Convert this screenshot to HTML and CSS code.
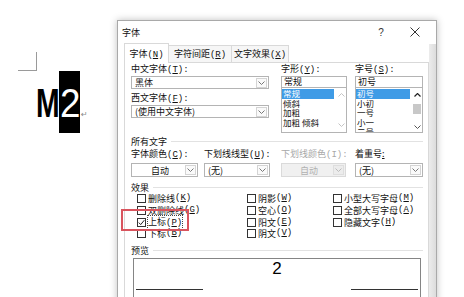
FILE: index.html
```html
<!DOCTYPE html>
<html lang="zh-CN">
<head>
    <meta charset="UTF-8">
    <meta name="viewport" content="width=device-width, initial-scale=1.0">
    <title>字体</title>
    <link rel="stylesheet" href="styles.css">
</head>
<body>
    <div class="doc">
        <div class="corner"></div>
        <div class="docline">
            <span class="m"><span class="glyph">M</span></span><span class="sel"><span class="glyph two">2</span></span><span class="para">↵</span>
        </div>
    </div>

    <div class="dialog">
        <div class="titlebar">
            <span class="title">字体</span>
            <span class="help">?</span>
            <span class="close">
                <svg width="10" height="10" viewBox="0 0 10 10"><path d="M0.5 0.5L9.5 9.5M9.5 0.5L0.5 9.5" stroke="#333" stroke-width="1" fill="none"/></svg>
            </span>
        </div>

        <div class="tabs">
            <div class="tab active">字体<span class="k">(<u>N</u>)</span></div>
            <div class="tab">字符间距<span class="k">(<u>R</u>)</span></div>
            <div class="tab">文字效果<span class="k">(<u>X</u>)</span></div>
        </div>

        <div class="panel">
            <div class="fontrow">
                <div class="col">
                    <div class="lbl">中文字体<span class="k">(<u>T</u>):</span></div>
                    <div class="combo wide"><span class="val">黑体</span><span class="drop"><svg width="7" height="4" viewBox="0 0 7 4"><path d="M0.5 0.5L3.5 3.5L6.5 0.5" stroke="#777" fill="none"/></svg></span></div>
                    <div class="lbl second">西文字体<span class="k">(<u>F</u>):</span></div>
                    <div class="combo wide"><span class="val">(使用中文字体)</span><span class="drop"><svg width="7" height="4" viewBox="0 0 7 4"><path d="M0.5 0.5L3.5 3.5L6.5 0.5" stroke="#777" fill="none"/></svg></span></div>
                </div>

                <div class="col">
                    <div class="lbl">字形<span class="k">(<u>Y</u>):</span></div>
                    <div class="field style-w">常规</div>
                    <div class="list style-w">
                        <div class="items">
                            <div class="item selected">常规</div>
                            <div class="item">倾斜</div>
                            <div class="item">加粗</div>
                            <div class="item">加粗 倾斜</div>
                        </div>
                        <div class="scroll off">
                            <span class="btn"><svg width="7" height="4" viewBox="0 0 7 4"><path d="M0.5 3.5L3.5 0.5L6.5 3.5" stroke="#c4c4c4" fill="none"/></svg></span>
                            <span class="btn"><svg width="7" height="4" viewBox="0 0 7 4"><path d="M0.5 0.5L3.5 3.5L6.5 0.5" stroke="#c4c4c4" fill="none"/></svg></span>
                        </div>
                    </div>
                </div>

                <div class="col">
                    <div class="lbl">字号<span class="k">(<u>S</u>):</span></div>
                    <div class="field size-w">初号</div>
                    <div class="list size-w">
                        <div class="items">
                            <div class="item selected">初号</div>
                            <div class="item">小初</div>
                            <div class="item">一号</div>
                            <div class="item">小一</div>
                            <div class="item">二号</div>
                        </div>
                        <div class="scroll">
                            <span class="btn"><svg width="7" height="4" viewBox="0 0 7 4"><path d="M0.5 3.5L3.5 0.5L6.5 3.5" stroke="#222" stroke-width="1.2" fill="none"/></svg></span>
                            <span class="thumb"></span>
                            <span class="btn down"><svg width="7" height="4" viewBox="0 0 7 4"><path d="M0.5 0.5L3.5 3.5L6.5 0.5" stroke="#555" fill="none"/></svg></span>
                        </div>
                    </div>
                </div>
            </div>

            <div class="group first">所有文字</div>

            <div class="colorrow">
                <div class="lbl">字体颜色<span class="k">(<u>C</u>):</span></div>
                <div class="lbl">下划线线型<span class="k">(<u>U</u>):</span></div>
                <div class="lbl dim">下划线颜色<span class="k">(I):</span></div>
                <div class="lbl">着重号<u>:</u></div>

                <div class="combo c1 center"><span class="val">自动</span><span class="drop"><svg width="7" height="4" viewBox="0 0 7 4"><path d="M0.5 0.5L3.5 3.5L6.5 0.5" stroke="#777" fill="none"/></svg></span></div>
                <div class="combo c2"><span class="val">(无)</span><span class="drop"><svg width="7" height="4" viewBox="0 0 7 4"><path d="M0.5 0.5L3.5 3.5L6.5 0.5" stroke="#777" fill="none"/></svg></span></div>
                <div class="combo c3 center disabled"><span class="val">自动</span><span class="drop"><svg width="7" height="4" viewBox="0 0 7 4"><path d="M0.5 0.5L3.5 3.5L6.5 0.5" stroke="#bbb" fill="none"/></svg></span></div>
                <div class="combo c4"><span class="val">(无)</span><span class="drop"><svg width="7" height="4" viewBox="0 0 7 4"><path d="M0.5 0.5L3.5 3.5L6.5 0.5" stroke="#777" fill="none"/></svg></span></div>
            </div>

            <div class="group">效果</div>

            <div class="effects">
                <div class="check"><span class="box"></span>删除线<span class="k">(<u>K</u>)</span></div>
                <div class="check"><span class="box"></span>双删除线<span class="k">(<u>G</u>)</span></div>
                <div class="check"><span class="box on"><svg width="7" height="7" viewBox="0 0 7 7"><path d="M0.8 3.6L2.7 5.6L6.3 1.2" stroke="#222" stroke-width="1" fill="none"/></svg></span><span class="focus">上标<span class="k">(<u>P</u>)</span></span></div>
                <div class="check"><span class="box"></span>下标<span class="k">(<u>B</u>)</span></div>

                <div class="check"><span class="box"></span>阴影<span class="k">(<u>W</u>)</span></div>
                <div class="check"><span class="box"></span>空心<span class="k">(<u>O</u>)</span></div>
                <div class="check"><span class="box"></span>阳文<span class="k">(<u>E</u>)</span></div>
                <div class="check"><span class="box"></span>阴文<span class="k">(<u>V</u>)</span></div>

                <div class="check"><span class="box"></span>小型大写字母<span class="k">(<u>M</u>)</span></div>
                <div class="check"><span class="box"></span>全部大写字母<span class="k">(<u>A</u>)</span></div>
                <div class="check"><span class="box"></span>隐藏文字<span class="k">(<u>H</u>)</span></div>
            </div>

            <div class="group">预览</div>

            <div class="preview">
                <div class="sample">2</div>
                <div class="rules">
                    <span class="rule"></span>
                    <span class="rule"></span>
                </div>
            </div>
        </div>
        <div class="edge"></div>
    </div>

    <div class="highlight"></div>
</body>
</html>
```

FILE: styles.css
```css
* {
    box-sizing: border-box;
}

body {
    margin: 0;
    width: 464px;
    height: 297px;
    overflow: hidden;
    position: relative;
    background-color: #fff;
    font-family: "Noto Sans CJK SC", sans-serif;
    font-size: 9px;
    color: #111;
}

u {
    text-decoration: underline;
    text-underline-offset: 1px;
}

.k {
    font-family: "Liberation Mono", monospace;
    font-size: 9px;
}

/* document behind the dialog */
.doc {
    padding: 52px 0 0 18px;
}

.corner {
    width: 19px;
    height: 19px;
    border-right: 1px solid #9a9a9a;
    border-bottom: 1px solid #9a9a9a;
}

.docline {
    display: flex;
    align-items: flex-start;
    height: 62px;
    margin-left: 18px;
    font-family: "Liberation Sans", sans-serif;
    font-weight: bold;
    font-size: 40px;
    line-height: 64px;
    color: #000;
}

.glyph {
    display: inline-block;
    transform-origin: 0 0;
}

.m {
    width: 23px;
    white-space: nowrap;
}

.m .glyph {
    transform: scaleX(0.71);
}

.sel {
    display: inline-block;
    width: 21px;
    height: 62px;
    overflow: hidden;
    padding-left: 1px;
    background-color: #000;
    color: #fff;
}

.two {
    font-weight: normal;
    transform: scaleX(0.92);
}

.para {
    font-family: "DejaVu Sans", sans-serif;
    font-weight: normal;
    font-size: 8px;
    line-height: 8px;
    color: #888;
    margin: 40px 0 0 1px;
}

/* dialog window */
.dialog {
    position: absolute;
    left: 117px;
    top: 20px;
    width: 320px;
    height: 290px;
    background-color: #fff;
    border: 1px solid #a9a9a9;
    box-shadow: 0 0 7px rgba(0, 0, 0, 0.25);
}

.titlebar {
    display: flex;
    align-items: center;
    height: 22px;
    padding: 0 6px 0 4px;
}

.title {
    flex: 1;
}

.help {
    width: 30px;
    margin-right: 4px;
    text-align: center;
    font-family: "Liberation Sans", sans-serif;
    font-size: 10px;
    color: #333;
}

.close {
    width: 30px;
    display: flex;
    justify-content: center;
}

.tabs {
    display: flex;
    align-items: flex-end;
    height: 19px;
    padding-left: 6px;
    position: relative;
    z-index: 1;
}

.tab {
    height: 17px;
    line-height: 16px;
    text-align: center;
    white-space: nowrap;
    border: 1px solid #d9d9d9;
    border-bottom: none;
    border-left: none;
    background-color: #f6f6f6;
}

.tab:nth-child(2) {
    width: 63px;
}

.tab:nth-child(3) {
    width: 57px;
}

.tab.active {
    width: 45px;
    height: 20px;
    margin-bottom: -1px;
    line-height: 19px;
    border-left: 1px solid #d9d9d9;
    background-color: #fff;
}

.panel {
    margin-left: 6px;
    width: 305px;
    height: 250px;
    padding: 0 5px 0 6px;
    border: 1px solid #d9d9d9;
}

.lbl {
    height: 11px;
    line-height: 11px;
    white-space: nowrap;
}

.lbl.second {
    margin-top: 3px;
}

.lbl.dim {
    color: #a8a8a8;
}

.fontrow {
    display: grid;
    grid-template-columns: 150px 74px 68px;
    height: 70px;
}

.combo {
    display: flex;
    align-items: center;
    height: 13px;
    margin-top: 2px;
    padding: 0 1px 0 3px;
    border: 1px solid #b4b4b4;
    background-color: #fff;
}

.combo.wide {
    width: 138px;
}

.combo .val {
    flex: 1;
    line-height: 11px;
    white-space: nowrap;
}

.combo.center .val {
    text-align: center;
}

.drop {
    display: flex;
    align-items: center;
    justify-content: center;
    width: 11px;
    height: 10px;
    border: 1px solid #d4d4d4;
    background-color: #fafafa;
}

.field {
    height: 12px;
    margin-top: 2px;
    padding-left: 2px;
    line-height: 10px;
    border: 1px solid #b4b4b4;
}

.style-w {
    width: 66px;
}

.size-w {
    width: 68px;
}

.list {
    display: flex;
    height: 45px;
    border: 1px solid #b4b4b4;
    border-top: none;
    overflow: hidden;
}

.items {
    flex: 1;
    padding-top: 1px;
    font-size: 8.5px;
}

.item {
    height: 9.5px;
    line-height: 9.5px;
    padding-left: 1px;
    margin-right: 2px;
    white-space: nowrap;
}

.item.selected {
    background-color: #3f9be6;
    color: #fff;
}

.scroll {
    display: flex;
    flex-direction: column;
    justify-content: space-between;
    width: 10px;
    background-color: #fff;
}

.scroll .btn {
    display: flex;
    align-items: center;
    justify-content: center;
    height: 14px;
}

.scroll .btn.down {
    height: 11px;
    margin-top: auto;
}

.thumb {
    display: block;
    height: 10px;
    margin: 2px 1px 0;
    background-color: #c8c8c8;
}

.group {
    display: flex;
    align-items: center;
    gap: 4px;
    height: 11px;
    line-height: 11px;
    margin-top: 5px;
}

.group::after {
    content: "";
    flex: 1;
    height: 1px;
    background-color: #e2e2e2;
}

.group.first {
    margin-top: 3px;
}

.colorrow {
    display: grid;
    grid-template-columns: 73px 77px 74px 68px;
    margin-top: 1px;
}

.colorrow .combo {
    height: 14px;
    margin-top: 4px;
}

.c1 {
    width: 67px;
}

.c2 {
    width: 66px;
}

.c3 {
    width: 65px;
}

.c4 {
    width: 68px;
}

.combo.disabled {
    background-color: #f0f0f0;
    border-color: #dadada;
    color: #b0b0b0;
}

.combo.disabled .drop {
    background-color: #ececec;
    border-color: #dedede;
}

.effects {
    display: grid;
    grid-template-columns: 110px 86px auto;
    grid-template-rows: repeat(4, 11.7px);
    grid-auto-flow: column;
    padding-left: 6px;
}

.check {
    display: flex;
    align-items: center;
    white-space: nowrap;
    line-height: 11px;
}

.box {
    display: flex;
    align-items: center;
    justify-content: center;
    width: 9px;
    height: 9px;
    margin-right: 2px;
    border: 1px solid #333;
    background-color: #fff;
}

.focus {
    outline: 1px dotted #444;
    outline-offset: 0;
}

.preview {
    display: flex;
    flex-direction: column;
    width: 288px;
    height: 50px;
    margin: 2.5px 0 0 2px;
    padding: 1px 2px 0;
    border: 1px solid #858585;
}

.sample {
    font-family: "Liberation Sans", sans-serif;
    font-size: 17px;
    line-height: 17px;
    text-align: center;
    color: #000;
}

.rules {
    display: flex;
    justify-content: space-between;
    margin-top: 12px;
}

.rule {
    width: 67px;
    height: 1px;
    background-color: #333;
}

.edge {
    position: absolute;
    right: 0;
    top: 23px;
    bottom: 0;
    width: 7px;
    background: linear-gradient(to right, #ececec, #dcdcdc);
}

/* annotation box drawn over the dialog */
.highlight {
    position: absolute;
    left: 121px;
    top: 209px;
    width: 68px;
    height: 22px;
    border: 2px solid #d9545e;
}
```
